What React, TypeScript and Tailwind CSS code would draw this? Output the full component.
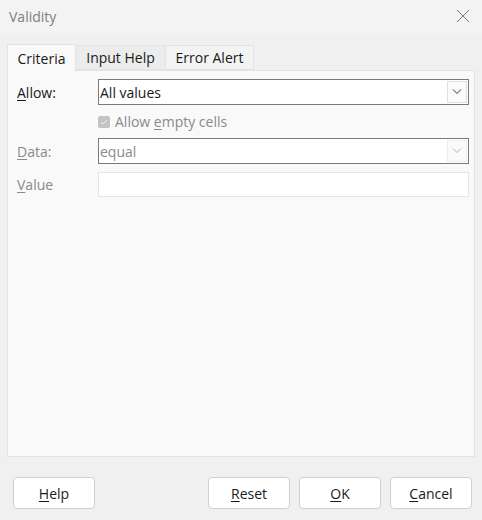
import React from "react";

const U = ({ c }: { c: string }) => <span className="underline underline-offset-2 decoration-1">{c}</span>;

export default function App() {
  return (
    <div className="w-[482px] h-[520px] bg-[#f0f0f0] flex flex-col text-[14px] text-[#1a1a1a]" style={{ fontFamily: '"Segoe UI", "Open Sans", sans-serif' }}>
      {/* title bar */}
      <div className="h-[35px] flex items-center justify-between pl-[9px] pr-[12px] bg-[#f3f3f3]">
        <span className="text-[#808080] text-[14px] mt-[-2px]">Validity</span>
        <svg width="14" height="14" viewBox="0 0 14 14" className="mt-[-3px]">
          <path d="M1 1 L13 13 M13 1 L1 13" stroke="#7a7a7a" strokeWidth="1" fill="none" />
        </svg>
      </div>
      {/* tabs */}
      <div className="flex px-[7px] mt-[9px] h-[26px] items-end">
        <div className="h-[27px] w-[69px] bg-[#f9f9f9] border border-b-0 border-[#e3e3e3] flex items-center justify-center relative z-10 mb-[-1px]">Criteria</div>
        <div className="h-[25px] w-[90px] bg-[#ececec] border border-l-0 border-[#e3e3e3] flex items-center justify-center">Input Help</div>
        <div className="h-[25px] w-[88px] bg-[#f3f3f3] border border-l-0 border-[#e3e3e3] flex items-center justify-center">Error Alert</div>
      </div>
      {/* panel */}
      <div className="mx-[7px] h-[387px] bg-[#f9f9f9] border border-[#e3e3e3] pt-[8px] pl-[9px] pr-[5px] flex flex-col">
        <div className="flex items-center h-[26px]">
          <span className="w-[81px]"><U c="A" />llow:</span>
          <div className="flex-1 h-[26px] bg-white border border-[#7a7a7a] flex items-center justify-between pl-[1px] pr-[1px]">
            <span>All values</span>
            <div className="w-[20px] h-[22px] border border-[#e0e0e0] bg-[#fafafa] flex items-center justify-center">
              <svg width="10" height="6" viewBox="0 0 10 6"><path d="M1 0.5 L5 4.5 L9 0.5" stroke="#333" strokeWidth="1" fill="none" /></svg>
            </div>
          </div>
        </div>
        <div className="flex items-center h-[33px] pl-[81px] text-[#8a8a8a]">
          <span className="w-[12px] h-[12px] rounded-[2px] bg-[#c4c4c4] flex items-center justify-center mr-[5px]">
            <svg width="8" height="6" viewBox="0 0 8 6"><path d="M1 3 L3 5 L7 1" stroke="#f0f0f0" strokeWidth="1" fill="none" /></svg>
          </span>
          <span>Allow <U c="e" />mpty cells</span>
        </div>
        <div className="flex items-center h-[26px] text-[#8a8a8a]">
          <span className="w-[81px]"><U c="D" />ata:</span>
          <div className="flex-1 h-[26px] bg-white border border-[#7a7a7a] flex items-center justify-between pl-[1px] pr-[1px]">
            <span>equal</span>
            <div className="w-[20px] h-[22px] border border-[#ececec] bg-[#fafafa] flex items-center justify-center">
              <svg width="10" height="6" viewBox="0 0 10 6"><path d="M1 0.5 L5 4.5 L9 0.5" stroke="#b0b0b0" strokeWidth="1" fill="none" /></svg>
            </div>
          </div>
        </div>
        <div className="flex items-center h-[25px] mt-[8px] text-[#8a8a8a]">
          <span className="w-[81px]"><U c="V" />alue</span>
          <div className="flex-1 h-[25px] bg-white border border-[#e5e5e5]"></div>
        </div>
      </div>
      {/* buttons */}
      <div className="flex px-[13px] mt-[20px]">
        <button className="w-[82px] h-[32px] bg-white border border-[#d0d0d0] rounded-[4px]"><U c="H" />elp</button>
        <div className="flex-1" />
        <div className="flex gap-[9px] mr-[-3px]">
          <button className="w-[82px] h-[32px] bg-white border border-[#d0d0d0] rounded-[4px]"><U c="R" />eset</button>
          <button className="w-[82px] h-[32px] bg-white border border-[#d0d0d0] rounded-[4px]"><U c="O" />K</button>
          <button className="w-[82px] h-[32px] bg-white border border-[#d0d0d0] rounded-[4px]"><U c="C" />ancel</button>
        </div>
      </div>
    </div>
  );
}
